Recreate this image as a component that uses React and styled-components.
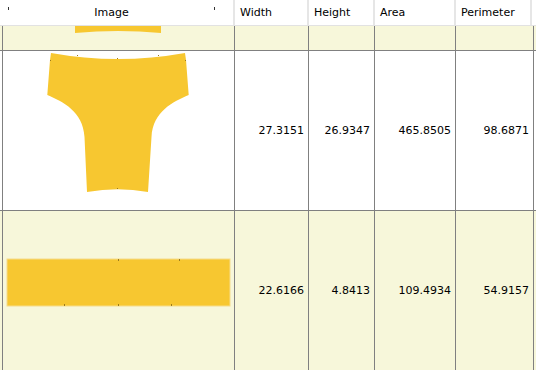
import React from "react";
import styled, { createGlobalStyle } from "styled-components";

const Global = createGlobalStyle`
  body {
    margin: 0;
    background: #f7f7da;
    font-family: "DejaVu Sans", Verdana, sans-serif;
    font-size: 11px;
    color: #000;
  }
`;

const Grid = styled.div`
  width: 536px;
  height: 370px;
  overflow: hidden;
  background: #f7f7da;
`;

const Header = styled.div`
  display: flex;
  height: 25px;
  background: #fff;
  border-bottom: 1px solid #e2e2e2;
`;

const HeadCell = styled.div`
  box-sizing: border-box;
  width: ${(p) => p.$w}px;
  display: flex;
  align-items: center;
  padding-left: 5px;
  border-right: 2px solid #e6e6e6;
  white-space: nowrap;
`;

const ImageHead = styled(HeadCell)`
  padding: 0 18px 0 8px;
`;

const HeadLabel = styled.span`
  flex: 1;
  text-align: center;
`;

const Tick = styled.span`
  width: 1px;
  height: 3px;
  background: #333;
  align-self: flex-start;
  margin-top: 7px;
`;

const Row = styled.div`
  display: grid;
  grid-template-columns: 233px 74px 66px 81px 78px;
  height: ${(p) => p.$h}px;
  padding-left: 2px;
  background: ${(p) => (p.$white ? "#fff" : "#f7f7da")};
  border-bottom: 1px solid #808080;
`;

const Cell = styled.div`
  box-sizing: border-box;
  border-right: 1px solid #808080;
  overflow: hidden;
`;

const ImageCell = styled(Cell)`
  border-left: 1px solid #808080;
`;

const NumCell = styled(Cell)`
  display: flex;
  align-items: center;
  justify-content: flex-end;
  padding-right: 4px;
`;

const Shape = styled.svg`
  display: block;
`;

const YELLOW = "#f7c730";
const MARK = "#9c7a1c";

const rows = [
  {
    h: 24,
    white: false,
    nums: null,
    draw: <path d="M72,0 L158,0 L158,7 Q115,3 72,7 Z" fill={YELLOW} />,
  },
  {
    h: 159,
    white: true,
    nums: ["27.3151", "26.9347", "465.8505", "98.6871"],
    draw: (
      <>
        <path
          d="M48,2 Q115,14 182,2 L183,9 L185.7,44 C170,51 150,60 148.5,86 L145,141 Q115,135.6 84,141 L81.5,86 C80,60 60,51 44.3,44 L47,9 Z"
          fill={YELLOW}
        />
        <rect x="47" y="9" width="1" height="1" fill={MARK} />
        <rect x="74" y="4" width="1" height="1" fill={MARK} />
        <rect x="155" y="4" width="1" height="1" fill={MARK} />
        <rect x="182" y="9" width="1" height="1" fill={MARK} />
        <rect x="114" y="7" width="1" height="1" fill={MARK} />
        <rect x="114" y="137" width="1" height="1" fill={MARK} />
      </>
    ),
  },
  {
    h: 159,
    white: false,
    nums: ["22.6166", "4.8413", "109.4934", "54.9157"],
    draw: (
      <>
        <rect x="4" y="48" width="223" height="47" fill={YELLOW} stroke="#f6dc8a" strokeWidth="1" />
        <rect x="115" y="48" width="1" height="2" fill={MARK} />
        <rect x="176" y="48" width="1" height="2" fill={MARK} />
        <rect x="61" y="93" width="1" height="2" fill={MARK} />
        <rect x="115" y="93" width="1" height="2" fill={MARK} />
        <rect x="168" y="93" width="1" height="2" fill={MARK} />
      </>
    ),
  },
];

export default function App() {
  return (
    <Grid>
      <Global />
      <Header>
        <ImageHead $w={235}>
          <Tick />
          <HeadLabel>Image</HeadLabel>
          <Tick />
        </ImageHead>
        <HeadCell $w={74}>Width</HeadCell>
        <HeadCell $w={66}>Height</HeadCell>
        <HeadCell $w={81}>Area</HeadCell>
        <HeadCell $w={76}>Perimeter</HeadCell>
      </Header>
      {rows.map((row, i) => (
        <Row key={i} $h={row.h} $white={row.white}>
          <ImageCell>
            <Shape width="231" height={row.h} viewBox={`0 0 231 ${row.h}`}>
              {row.draw}
            </Shape>
          </ImageCell>
          {(row.nums || ["", "", "", ""]).map((n, j) => (
            <NumCell key={j}>{n}</NumCell>
          ))}
        </Row>
      ))}
    </Grid>
  );
}
